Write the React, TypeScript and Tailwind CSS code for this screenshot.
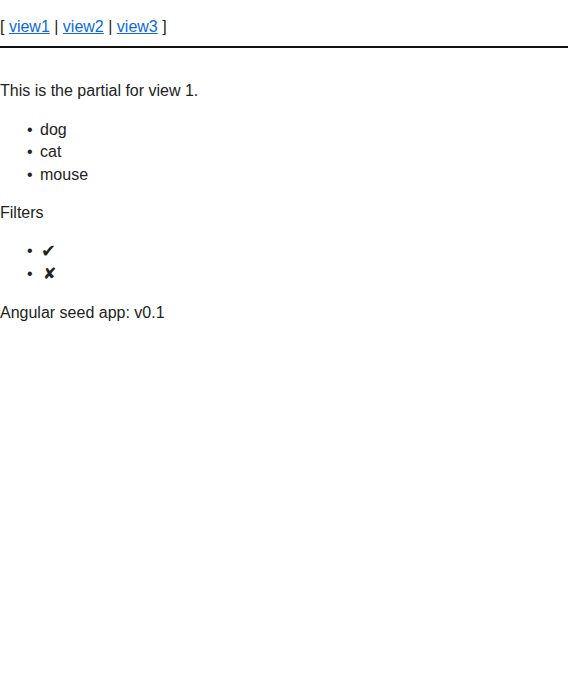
export default function App() {
  const animals = ["dog", "cat", "mouse"];
  return (
    <div className="min-h-[688px] bg-white text-[16px] leading-[22.4px] text-[#222] font-['Liberation_Sans',Arial,sans-serif]">
      <div className="pt-[16px] pb-[8px] border-b-2 border-[#111]">
        [ <a href="#" className="text-[#0b6ad6] underline">view1</a> |{" "}
        <a href="#" className="text-[#0b6ad6] underline">view2</a> |{" "}
        <a href="#" className="text-[#0b6ad6] underline">view3</a> ]
      </div>
      <div className="pt-[32px]">
        <p>This is the partial for view 1.</p>
        <ul className="my-4 pl-[27px]">
          {animals.map((a) => (
            <li key={a} className="flex">
              <span className="w-[13px]">•</span>
              {a}
            </li>
          ))}
        </ul>
        <p>Filters</p>
        <ul className="my-4 pl-[27px]">
          <li className="flex">
            <span className="w-[13px]">•</span>
            <span className="text-[18px] ml-[1px]">✔</span>
          </li>
          <li className="flex">
            <span className="w-[13px]">•</span>
            <span className="ml-[3px]">✘</span>
          </li>
        </ul>
        <div className="pt-[1px]">Angular seed app: v0.1</div>
      </div>
    </div>
  );
}
